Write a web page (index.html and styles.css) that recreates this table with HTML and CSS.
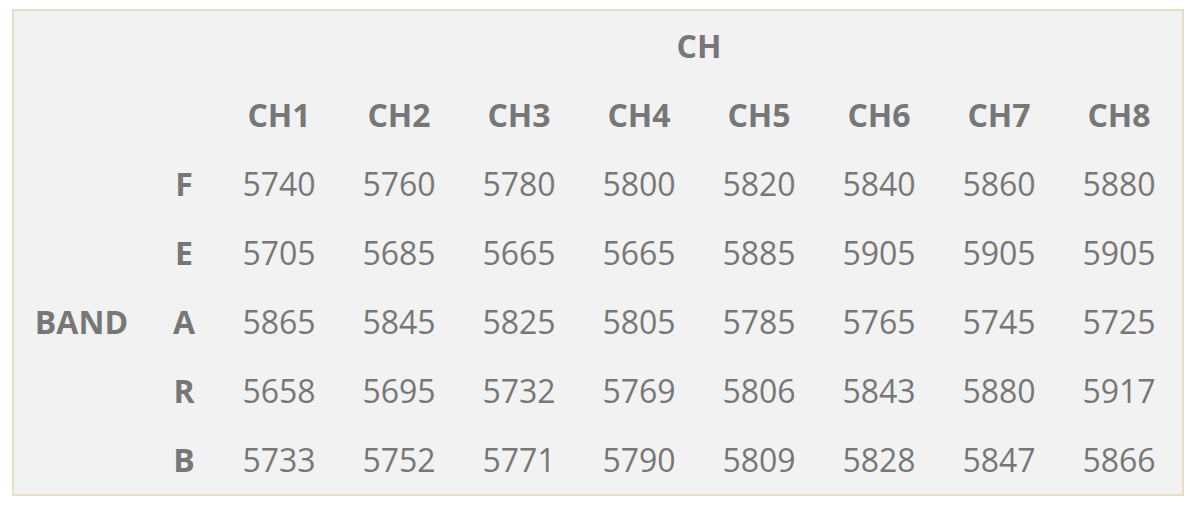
FILE: index.html
```html
<!DOCTYPE html>
<html>
<head>
<meta charset="utf-8">
<link rel="stylesheet" href="styles.css">
</head>
<body>
<div class="frame">
<table class="freq">
  <colgroup>
    <col class="c-band"><col class="c-letter">
    <col class="c-ch"><col class="c-ch"><col class="c-ch"><col class="c-ch">
    <col class="c-ch"><col class="c-ch"><col class="c-ch"><col class="c-ch">
  </colgroup>
  <tr><td colspan="2" rowspan="2"></td><th colspan="8">CH</th></tr>
  <tr><th>CH1</th><th>CH2</th><th>CH3</th><th>CH4</th><th>CH5</th><th>CH6</th><th>CH7</th><th>CH8</th></tr>
  <tr><th rowspan="5">BAND</th><th>F</th><td>5740</td><td>5760</td><td>5780</td><td>5800</td><td>5820</td><td>5840</td><td>5860</td><td>5880</td></tr>
  <tr><th>E</th><td>5705</td><td>5685</td><td>5665</td><td>5665</td><td>5885</td><td>5905</td><td>5905</td><td>5905</td></tr>
  <tr><th>A</th><td>5865</td><td>5845</td><td>5825</td><td>5805</td><td>5785</td><td>5765</td><td>5745</td><td>5725</td></tr>
  <tr><th>R</th><td>5658</td><td>5695</td><td>5732</td><td>5769</td><td>5806</td><td>5843</td><td>5880</td><td>5917</td></tr>
  <tr><th>B</th><td>5733</td><td>5752</td><td>5771</td><td>5790</td><td>5809</td><td>5828</td><td>5847</td><td>5866</td></tr>
</table>
</div>
</body>
</html>
```

FILE: styles.css
```css
html, body {
  margin: 0;
  padding: 0;
  background: #ffffff;
}
body {
  font-family: "Open Sans", "Liberation Sans", sans-serif;
  color: #777777;
}
.frame {
  margin: 9px 0 0 12px;
  width: 1168px;
  border: 2px solid #e7dec6;
  background: #f2f2f2;
}
.freq {
  border-collapse: collapse;
  table-layout: fixed;
  width: 1165px;
}
.c-band { width: 135px; }
.c-letter { width: 70px; }
.c-ch { width: 120px; }
.freq th, .freq td {
  height: 69px;
  padding: 0;
  text-align: center;
  vertical-align: middle;
  font-size: 32px;
  line-height: 40px;
  white-space: nowrap;
}
.freq th {
  font-weight: 700;
}
.freq td {
  font-weight: 400;
}
```
